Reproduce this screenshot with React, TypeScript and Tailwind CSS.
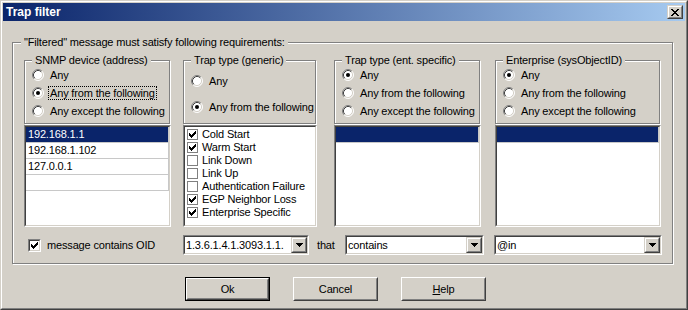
import type { ReactNode } from 'react'

// Win2000-style "Trap filter" dialog

const CLOSE_X = ['XX....XX', '.XX..XX.', '..XXXX..', '...XX...', '..XXXX..', '.XX..XX.', 'XX....XX']
const ARROW = ['XXXXXXX', '.XXXXX.', '..XXX..', '...X...']
const CHECK = ['......X', '.....XX', 'X...XXX', 'XX.XXX.', 'XXXXX..', '.XXX...', '..X....']

function Pixels({ rows, className = '' }: { rows: string[]; className?: string }) {
  return (
    <svg width={rows[0].length} height={rows.length} className={className} shapeRendering="crispEdges">
      {rows.flatMap((r, y) =>
        r.split('').map((c, x) => (c === 'X' ? <rect key={`${x}-${y}`} x={x} y={y} width="1" height="1" fill="#000" /> : null)),
      )}
    </svg>
  )
}

function Radio({ checked = false }: { checked?: boolean }) {
  return (
    <svg width="12" height="12" viewBox="0 0 12 12" className="shrink-0">
      <circle cx="6" cy="6" r="5" fill="#fff" />
      <path d="M2.11 9.89A5.5 5.5 0 0 1 9.89 2.11" stroke="#808080" fill="none" />
      <path d="M9.89 2.11A5.5 5.5 0 0 1 2.11 9.89" stroke="#fff" fill="none" />
      <path d="M2.82 9.18A4.5 4.5 0 0 1 9.18 2.82" stroke="#404040" fill="none" />
      <path d="M9.18 2.82A4.5 4.5 0 0 1 2.82 9.18" stroke="#d4d0c8" fill="none" />
      {checked && <circle cx="6" cy="6" r="2" fill="#000" />}
    </svg>
  )
}

function Sunken({ className = '', children }: { className?: string; children?: ReactNode }) {
  return (
    <div className={`border border-t-[#808080] border-l-[#808080] border-b-white border-r-white ${className}`}>
      <div className="h-full w-full border border-t-[#404040] border-l-[#404040] border-b-[#d4d0c8] border-r-[#d4d0c8] bg-white">
        {children}
      </div>
    </div>
  )
}

function SmallButton({ className = '', children }: { className?: string; children?: ReactNode }) {
  return (
    <div className={`shrink-0 border border-t-[#d4d0c8] border-l-[#d4d0c8] border-b-[#404040] border-r-[#404040] bg-[#d4d0c8] ${className}`}>
      <div className="h-full w-full flex items-center justify-center border border-t-white border-l-white border-b-[#808080] border-r-[#808080]">
        {children}
      </div>
    </div>
  )
}

function Group({ title, className = '', children }: { title: string; className?: string; children?: ReactNode }) {
  return (
    <fieldset className={`border border-[#808080] shadow-[inset_1px_1px_0_#fff,1px_1px_0_#fff] ${className}`}>
      <legend className="ml-[7px] px-[3px] leading-[12px] bg-[#d4d0c8]">{title}</legend>
      {children}
    </fieldset>
  )
}

function RadioRow({ label, checked, focus }: { label: string; checked?: boolean; focus?: boolean }) {
  return (
    <div className="h-[18px] flex items-center pl-[7px]">
      <Radio checked={checked} />
      {focus ? (
        <span className="ml-[4px] px-[1px] border border-dotted border-black leading-[12px] whitespace-nowrap">{label}</span>
      ) : (
        <span className="ml-[6px] whitespace-nowrap">{label}</span>
      )}
    </div>
  )
}

function ListRow({ text, selected }: { text?: string; selected?: boolean }) {
  return (
    <div
      className={`h-[16px] flex items-center pl-[2px] border-b border-r border-[#c8c8c8] whitespace-nowrap ${
        selected ? 'bg-[#0a246a] text-white' : ''
      }`}
    >
      {text}
    </div>
  )
}

function CheckItem({ label, checked }: { label: string; checked?: boolean }) {
  return (
    <div className="h-[13px] flex items-center pl-[2px]">
      <div className="w-[11px] h-[11px] border border-[#808080] bg-white flex items-center justify-center shrink-0">
        {checked && <Pixels rows={CHECK} />}
      </div>
      <span className="ml-[4px] whitespace-nowrap">{label}</span>
    </div>
  )
}

function Combo({ value, className = '' }: { value: string; className?: string }) {
  return (
    <Sunken className={`h-[20px] ${className}`}>
      <div className="h-full flex items-center">
        <span className="flex-1 pl-[1px] overflow-hidden whitespace-nowrap">{value}</span>
        <SmallButton className="w-[16px] h-[16px]">
          <Pixels rows={ARROW} />
        </SmallButton>
      </div>
    </Sunken>
  )
}

function PushButton({ label, isDefault }: { label: ReactNode; isDefault?: boolean }) {
  const face = (
    <div className="h-full w-full border border-t-white border-l-white border-b-[#404040] border-r-[#404040]">
      <div className="h-full w-full flex items-center justify-center border border-t-[#d4d0c8] border-l-[#d4d0c8] border-b-[#808080] border-r-[#808080]">
        {label}
      </div>
    </div>
  )
  return isDefault ? (
    <div className="w-[85px] h-[24px] border border-black">{face}</div>
  ) : (
    <div className="w-[85px] h-[24px]">{face}</div>
  )
}

const TRAPS = [
  { label: 'Cold Start', checked: true },
  { label: 'Warm Start', checked: true },
  { label: 'Link Down', checked: false },
  { label: 'Link Up', checked: false },
  { label: 'Authentication Failure', checked: false },
  { label: 'EGP Neighbor Loss', checked: true },
  { label: 'Enterprise Specific', checked: true },
]

export default function App() {
  return (
    <div className="w-[688px] h-[310px] overflow-hidden font-['Liberation_Sans',Arial,sans-serif] text-[11px] leading-[13px] tracking-[-0.16px] text-black">
      <div className="h-full border border-t-[#d4d0c8] border-l-[#d4d0c8] border-b-[#404040] border-r-[#404040] bg-[#d4d0c8]">
        <div className="h-full border border-t-white border-l-white border-b-[#808080] border-r-[#808080] p-px flex flex-col">
          {/* title bar */}
          <div className="h-[18px] shrink-0 flex items-center bg-linear-to-r/srgb from-[#0a246a] to-[#a6caf0] pl-[3px] pr-[2px]">
            <span className="flex-1 text-white font-bold text-[12px] tracking-normal">Trap filter</span>
            <SmallButton className="w-[16px] h-[14px]">
              <Pixels rows={CLOSE_X} />
            </SmallButton>
          </div>

          <fieldset className="ml-[9px] mt-[15px] w-[661px] h-[228px] shrink-0 border border-[#808080] shadow-[inset_1px_1px_0_#fff,1px_1px_0_#fff]">
            <legend className="ml-[8px] px-[3px] leading-[12px] bg-[#d4d0c8]">
              "Filtered" message must satisfy following requirements:
            </legend>

            <div className="flex pl-[11px] mt-[6px]">
              <div className="w-[147px]">
                <Group title="SNMP device (address)" className="w-[146px] h-[70px]">
                  <RadioRow label="Any" />
                  <RadioRow label="Any from the following" checked focus />
                  <RadioRow label="Any except the following" />
                </Group>
                <Sunken className="mt-[1px] h-[102px]">
                  <ListRow text="192.168.1.1" selected />
                  <ListRow text="192.168.1.102" />
                  <ListRow text="127.0.0.1" />
                  <ListRow />
                </Sunken>
              </div>

              <div className="w-[134px] ml-[12px]">
                <Group title="Trap type (generic)" className="w-[133px] h-[70px]">
                  <div className="pt-[6px] flex flex-col gap-[8px]">
                    <RadioRow label="Any" />
                    <RadioRow label="Any from the following" checked />
                  </div>
                </Group>
                <Sunken className="mt-[1px] h-[102px]">
                  <div className="pt-px">
                    {TRAPS.map((t) => (
                      <CheckItem key={t.label} label={t.label} checked={t.checked} />
                    ))}
                  </div>
                </Sunken>
              </div>

              <div className="w-[147px] ml-[17px]">
                <Group title="Trap type (ent. specific)" className="w-[146px] h-[70px]">
                  <RadioRow label="Any" checked />
                  <RadioRow label="Any from the following" />
                  <RadioRow label="Any except the following" />
                </Group>
                <Sunken className="mt-[1px] h-[102px]">
                  <ListRow selected />
                </Sunken>
              </div>

              <div className="w-[166px] ml-[14px]">
                <Group title="Enterprise (sysObjectID)" className="w-[165px] h-[70px]">
                  <RadioRow label="Any" checked />
                  <RadioRow label="Any from the following" />
                  <RadioRow label="Any except the following" />
                </Group>
                <Sunken className="mt-[1px] h-[102px]">
                  <ListRow selected />
                </Sunken>
              </div>
            </div>

            {/* bottom row */}
            <div className="flex items-center pl-[11px] mt-[8px]">
              <div className="w-[159px] flex items-center pl-[4px]">
                <Sunken className="w-[13px] h-[13px] shrink-0">
                  <div className="h-full flex items-center justify-center">
                    <Pixels rows={CHECK} />
                  </div>
                </Sunken>
                <span className="ml-[6px] whitespace-nowrap">message contains OID</span>
              </div>
              <Combo value="1.3.6.1.4.1.3093.1.1." className="w-[126px]" />
              <span className="ml-[8px] w-[28px]">that</span>
              <Combo value="contains" className="w-[139px]" />
              <Combo value="@in" className="w-[168px] ml-[10px]" />
            </div>
          </fieldset>

          <div className="flex gap-[23px] ml-[182px] mt-[13px]">
            <PushButton label="Ok" isDefault />
            <PushButton label="Cancel" />
            <PushButton
              label={
                <span>
                  <span className="underline">H</span>elp
                </span>
              }
            />
          </div>
        </div>
      </div>
    </div>
  )
}
